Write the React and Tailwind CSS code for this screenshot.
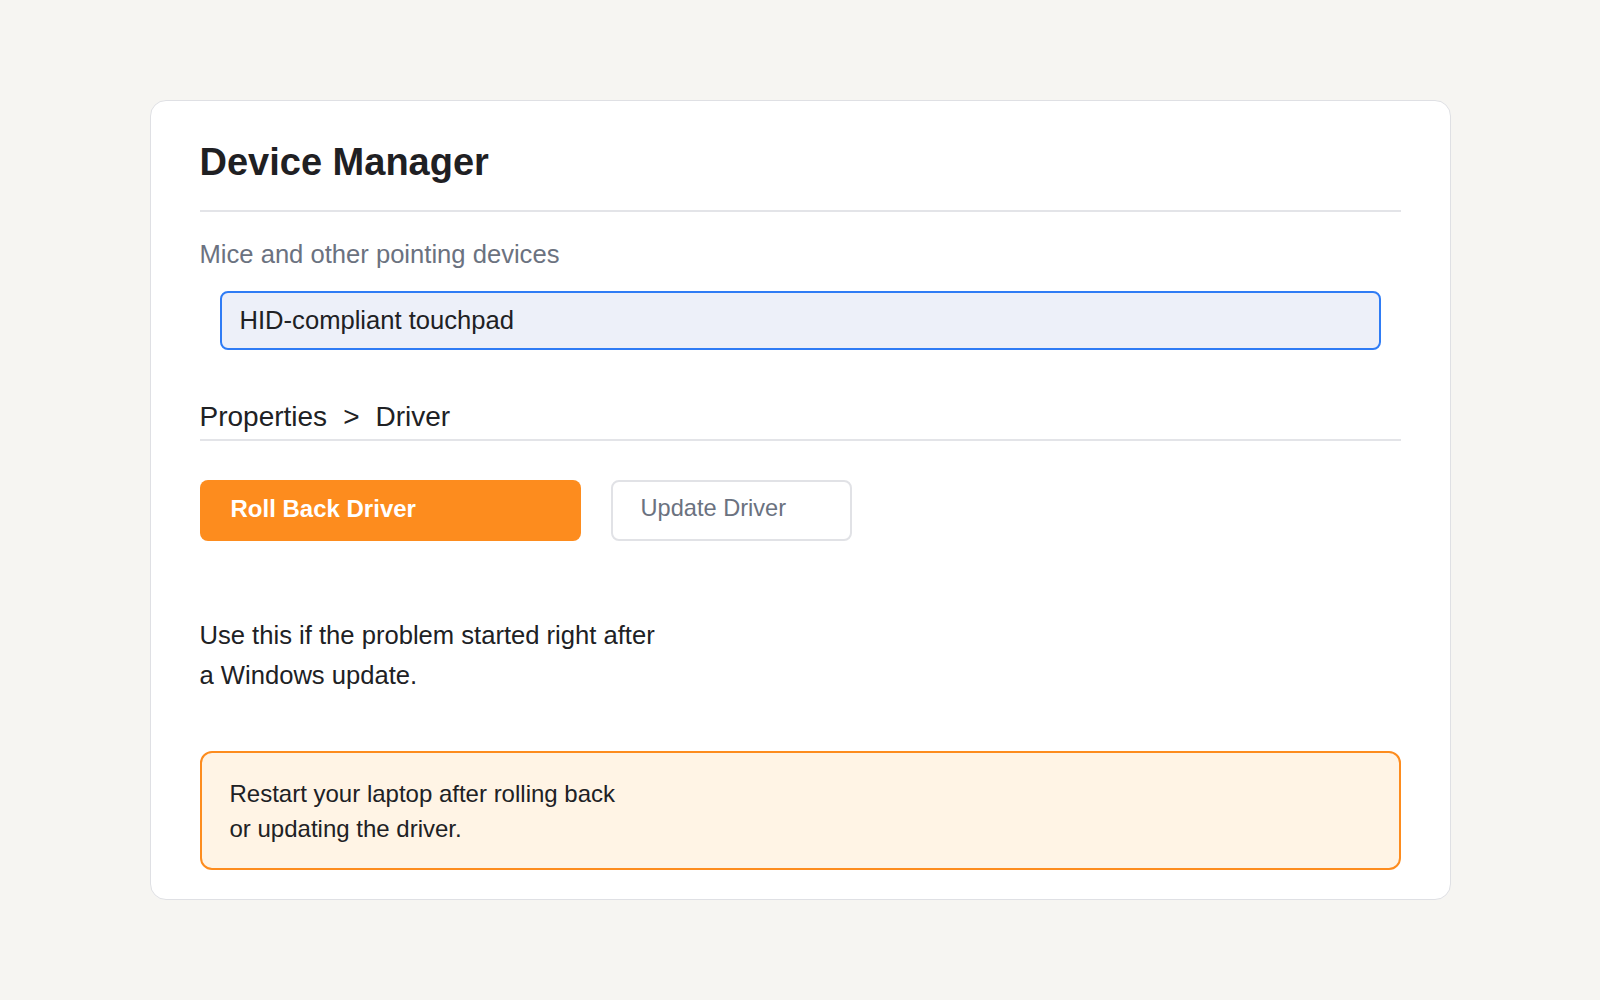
export default function App() {
  return (
    <div
      className="min-h-screen w-full bg-[#f6f5f2] flex items-center justify-center"
      style={{ fontFamily: '"Liberation Sans", Arial, sans-serif' }}
    >
      <div className="w-[1301px] bg-white border border-[#dfe0e4] rounded-2xl pl-[49px] pr-[49px] pt-[38px] pb-[29px]">
        {/* header */}
        <h1 className="text-[38px] leading-[46px] font-bold text-[#1f2023] pb-[25px] border-b-2 border-[#e3e4e8]">
          Device Manager
        </h1>

        <p className="mt-[26px] text-[25.6px] leading-[32px] text-[#6b7280]">
          Mice and other pointing devices
        </p>

        {/* selected device */}
        <div className="mt-[21px] mx-5 h-[59px] flex items-center px-[18px] bg-[#edf0f9] border-2 border-[#2f7cf5] rounded-lg">
          <span className="text-[25.6px] text-[#202124]">HID-compliant touchpad</span>
        </div>

        {/* breadcrumb */}
        <div className="mt-[50px] pb-[5px] border-b-2 border-[#e3e4e8] flex items-center text-[28px] leading-[34px] text-[#202124]">
          <span>Properties</span>
          <span className="mx-[16px]">&gt;</span>
          <span>Driver</span>
        </div>

        {/* actions */}
        <div className="mt-[39px] flex gap-[30px]">
          <button className="w-[381px] h-[61px] flex items-center pl-[31px] pb-[3px] bg-[#fd8c1e] rounded-lg text-white text-[24px] font-bold">
            Roll Back Driver
          </button>
          <button className="w-[241px] h-[61px] flex items-center pl-[28px] pb-[3px] bg-white border-2 border-[#e1e2e6] rounded-lg text-[#6b7280] text-[23.6px]">
            Update Driver
          </button>
        </div>

        <p className="mt-[74px] text-[25.6px] leading-[40px] text-[#202124]">
          Use this if the problem started right after
          <br />
          a Windows update.
        </p>

        {/* notice */}
        <div className="mt-[56px] bg-[#fff4e5] border-2 border-[#fd8c1e] rounded-xl px-[28px] pt-[23px] pb-[22px] text-[24px] leading-[35px] text-[#202124]">
          Restart your laptop after rolling back
          <br />
          or updating the driver.
        </div>
      </div>
    </div>
  );
}
